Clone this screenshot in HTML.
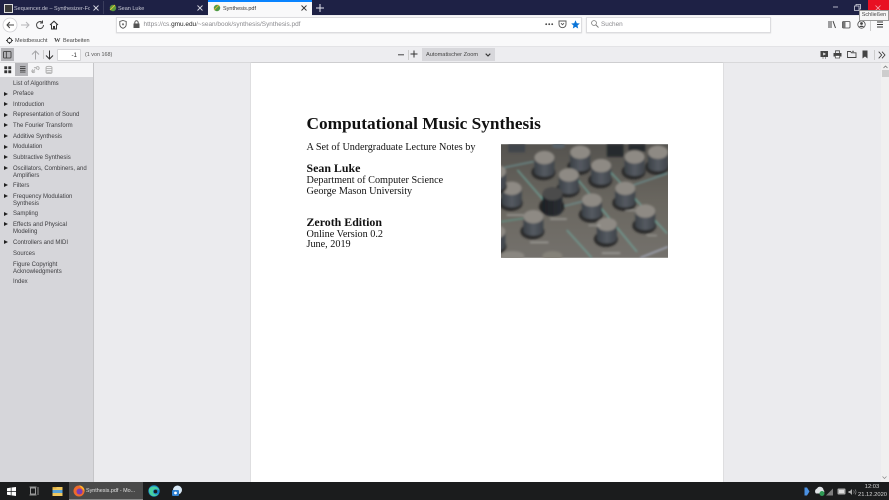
<!DOCTYPE html>
<html lang="de"><head><meta charset="utf-8"><title>Synthesis.pdf</title>
<style>
html,body{margin:0;padding:0;width:889px;height:500px;overflow:hidden;background:#ededf0;font-family:"Liberation Sans",sans-serif}
.a{position:absolute;white-space:nowrap}
#root{position:relative;width:889px;height:500px;overflow:hidden}
.t{font-size:5.5px;line-height:8px;color:#333}
.toc{position:absolute;left:13px;font-size:6px;line-height:7.2px;color:#3d3d40;white-space:nowrap}
.tri{position:absolute;left:4px;width:0;height:0;border-left:4px solid #222;border-top:2.5px solid transparent;border-bottom:2.5px solid transparent}
.pdf{position:absolute;left:306.5px;font-family:"Liberation Serif",serif;color:#111;white-space:nowrap}
.r{font-size:10.2px;line-height:13px}
.h{font-size:11.9px;line-height:15px;font-weight:700}
svg{position:absolute;overflow:visible}
</style></head><body><div id="root">

<!-- title bar -->
<div class="a" style="left:0;top:0;width:889px;height:15px;background:#1e2145"></div>
<div class="a" style="left:103px;top:1px;width:1px;height:13px;background:#3a3d5c"></div>
<div class="a" style="left:208px;top:0;width:104px;height:16px;background:#f9f9fa"></div>
<div class="a" style="left:208px;top:0;width:104px;height:1.5px;background:#0a84ff"></div>
<div class="a" style="left:4px;top:4px;width:7px;height:7px;background:#3a3a3a;border:.5px solid #ddd"></div>
<div class="a t" style="left:14px;top:4.5px;color:#c9cad6;width:76px;overflow:hidden">Sequencer.de – Synthesizer-Fo</div>
<div class="a t" style="left:118px;top:4.5px;color:#c9cad6">Sean Luke</div>
<div class="a t" style="left:223px;top:4.5px;color:#333">Synthesis.pdf</div>
<svg style="left:109px;top:4px" width="8" height="8"><circle cx="4" cy="4" r="3.2" fill="#5c9a3c"/><path d="M1 6 6 1" stroke="#d9c23a"/></svg>
<svg style="left:213px;top:4px" width="8" height="8"><circle cx="4" cy="4" r="3.2" fill="#4f9a45"/><path d="M1 6 6 1" stroke="#d9b83a"/></svg>
<svg style="left:93px;top:5px" width="6" height="6"><path d="M.5.5l5 5M5.500.5l-5 5" stroke="#d5d6e0" stroke-width=".9"/></svg>
<svg style="left:197px;top:5px" width="6" height="6"><path d="M.5.5l5 5M5.500.5l-5 5" stroke="#d5d6e0" stroke-width=".9"/></svg>
<svg style="left:301px;top:5px" width="6" height="6"><path d="M.5.5l5 5M5.500.5l-5 5" stroke="#333" stroke-width=".9"/></svg>
<svg style="left:316px;top:4px" width="8" height="8"><path d="M4 0v8M0 4h8" stroke="#e4e5ee" stroke-width="1"/></svg>
<!-- window controls -->
<div class="a" style="left:868px;top:0;width:21px;height:15px;background:#e81123"></div>
<svg style="left:833px;top:6px" width="6" height="2"><path d="M0 1h5" stroke="#c5c6d4" stroke-width=".9"/></svg>
<svg style="left:854px;top:4px" width="7" height="7"><path d="M.5 2h4.500v4.500H.5zM2 2V.5h4.500V5H5" fill="none" stroke="#d5d6e0" stroke-width=".8"/></svg>
<svg style="left:875px;top:5px" width="6" height="6"><path d="M.5.5l5 5M5.500.5l-5 5" stroke="#f3b0b5" stroke-width=".8"/></svg>
<div class="a" style="left:859px;top:10px;width:28px;height:9px;background:#f5f5f5;border:.5px solid #999;font-size:5.500px;line-height:9px;text-align:center;color:#444;z-index:5">Schließen</div>

<!-- nav bar -->
<div class="a" style="left:0;top:16px;width:889px;height:31px;background:#f9f9fa"></div>
<svg style="left:2px;top:17px" width="16" height="16"><circle cx="8" cy="8" r="7" fill="#fff" stroke="#cfcfd3" stroke-width=".8"/><path d="M12 8H5M7.800 5 5 8l2.800 3" fill="none" stroke="#444" stroke-width="1"/></svg>
<svg style="left:20px;top:20px" width="10" height="10"><path d="M1 5h8M6 2l3 3-3 3" fill="none" stroke="#b5b5b8" stroke-width="1"/></svg>
<svg style="left:35px;top:20px" width="10" height="10"><path d="M8.500 5A3.500 3.500 0 1 1 7 2.200M7.500 .5v2.500H5" fill="none" stroke="#444" stroke-width="1"/></svg>
<svg style="left:49px;top:20px" width="10" height="10"><path d="M1 5 5 1.200 9 5M2.500 4.500V9h2V6.500h1V9h2V4.500" fill="none" stroke="#333" stroke-width="1"/></svg>
<div class="a" style="left:116px;top:17px;width:464px;height:14px;background:#fff;border:.5px solid #dcdcdf;box-shadow:0 .5px 1px #ddd"></div>
<svg style="left:119px;top:20px" width="8" height="9"><path d="M4 .5 7.200 1.500V4.500C7.200 6.500 5.500 7.800 4 8.300 2.500 7.800.8 6.500.8 4.500V1.500z" fill="none" stroke="#555" stroke-width=".9"/><circle cx="4" cy="4.300" r="1.100" fill="#777"/></svg>
<svg style="left:133px;top:20px" width="7" height="9"><rect x=".5" y="3.500" width="6" height="4.500" fill="#555"/><path d="M1.800 3.500V2.500a1.700 1.700 0 0 1 3.400 0v1" fill="none" stroke="#555"/></svg>
<div class="a t" style="left:143.500px;top:21px;color:#8a8a8e;font-size:6.450px">https://cs.<span style="color:#222">gmu.edu</span>/~sean/book/synthesis/Synthesis.pdf</div>
<svg style="left:545px;top:23px" width="9" height="3"><circle cx="1.200" cy="1.200" r=".9" fill="#444"/><circle cx="4.200" cy="1.200" r=".9" fill="#444"/><circle cx="7.200" cy="1.200" r=".9" fill="#444"/></svg>
<svg style="left:558px;top:20px" width="9" height="9"><path d="M1 1h7v3.200a3.500 3.500 0 0 1-7 0zM3 3.200 4.500 4.700 6 3.200" fill="none" stroke="#555" stroke-width=".9"/></svg>
<svg style="left:571px;top:20px" width="9" height="9"><path d="M4.500 .3 5.800 3.200 8.800 3.500 6.500 5.500 7.200 8.500 4.500 6.900 1.800 8.500 2.500 5.500.2 3.500 3.200 3.200z" fill="#0a74d8"/></svg>
<div class="a" style="left:586px;top:17px;width:183px;height:14px;background:#fff;border:.5px solid #dcdcdf;box-shadow:0 .5px 1px #ddd"></div>
<svg style="left:591px;top:20px" width="8" height="8"><circle cx="3" cy="3" r="2.400" fill="none" stroke="#777" stroke-width=".8"/><path d="M4.800 4.800 7.500 7.500" stroke="#777" stroke-width=".9"/></svg>
<div class="a t" style="left:601px;top:21px;color:#8a8a8e;font-size:6.400px">Suchen</div>
<svg style="left:828px;top:20px" width="9" height="9"><path d="M1 1v7M3 1v7M5 1l2.500 7" fill="none" stroke="#444" stroke-width="1"/></svg>
<svg style="left:842px;top:21px" width="9" height="8"><rect x=".5" y=".5" width="7.500" height="6.500" rx="1" fill="none" stroke="#444" stroke-width=".8"/><rect x="1" y="1" width="2.500" height="5.500" fill="#777"/></svg>
<svg style="left:857px;top:20px" width="9" height="9"><circle cx="4.500" cy="4.500" r="3.700" fill="none" stroke="#444" stroke-width=".8"/><circle cx="4.500" cy="3.500" r="1.400" fill="#444"/><path d="M2 7c1-1.800 4-1.800 5 0" fill="#444"/></svg>
<div class="a" style="left:870px;top:19px;width:.5px;height:12px;background:#ccc"></div>
<svg style="left:876px;top:21px" width="8" height="8"><path d="M1 1h6M1 3.500h6M1 6h6" stroke="#333" stroke-width=".9"/></svg>

<!-- bookmarks -->
<svg style="left:6px;top:37px" width="7" height="7"><circle cx="3.500" cy="3.500" r="2.200" fill="none" stroke="#444" stroke-width="1.100"/><path d="M3.500 0v1.200M3.500 5.800V7M0 3.500h1.200M5.800 3.500H7" stroke="#444"/></svg>
<div class="a t" style="left:15px;top:37px;color:#444">Meistbesucht</div>
<div class="a" style="left:54px;top:36.500px;font:700 6.500px/8px 'Liberation Serif',serif;color:#444">W</div>
<div class="a t" style="left:63px;top:37px;color:#444">Bearbeiten</div>

<!-- pdf toolbar -->
<div class="a" style="left:0;top:46px;width:889px;height:.7px;background:#e3e3e6"></div>
<div class="a" style="left:0;top:62px;width:889px;height:.7px;background:#d8d8da"></div>
<div class="a" style="left:1px;top:48px;width:13px;height:13px;background:#b4b4b8"></div>
<svg style="left:3px;top:51px" width="9" height="8"><rect x=".5" y=".5" width="7.500" height="6.500" rx=".8" fill="none" stroke="#333" stroke-width=".8"/><path d="M3.300 .5v6.500" stroke="#333" stroke-width=".8"/></svg>
<svg style="left:31px;top:50px" width="9" height="10"><path d="M4.500 9.500V1M1 4.500 4.500 1 8 4.500" fill="none" stroke="#a5a5a8" stroke-width="1"/></svg>
<div class="a" style="left:42.500px;top:50px;width:.5px;height:9px;background:#ccc"></div>
<svg style="left:45px;top:50px" width="9" height="10"><path d="M4.500 .5V9M1 5.500 4.500 9 8 5.500" fill="none" stroke="#333" stroke-width="1"/></svg>
<div class="a" style="left:57px;top:48.500px;width:24px;height:12px;background:#fff;border:.5px solid #d5d5d8;border-radius:1px;font-size:6.200px;line-height:12px;text-align:right;color:#333;padding-right:3px;box-sizing:border-box">-1</div>
<div class="a t" style="left:85px;top:50.500px;color:#555;font-size:5.400px">(1 von 168)</div>
<svg style="left:398px;top:54px" width="7" height="2"><path d="M0 .8h6" stroke="#444" stroke-width="1"/></svg>
<div class="a" style="left:407.500px;top:50px;width:.5px;height:10px;background:#ccc"></div>
<svg style="left:410px;top:50px" width="9" height="9"><path d="M4 .5v7M.5 4h7" stroke="#333" stroke-width="1"/></svg>
<div class="a" style="left:422px;top:48px;width:73px;height:13px;background:#d7d7db"></div>
<div class="a t" style="left:426px;top:50.500px;color:#444;font-size:5.650px">Automatischer Zoom</div>
<svg style="left:485px;top:52.500px" width="6" height="4"><path d="M.7.7 3 3 5.300.7" fill="none" stroke="#333" stroke-width="1.100"/></svg>
<svg style="left:820px;top:50px" width="9" height="9"><rect x=".5" y="1" width="7.500" height="6" fill="#444"/><path d="M3.200 2.500 6 4 3.200 5.500z" fill="#eee"/><path d="M2.500 8h1M5 8h1" stroke="#444"/></svg>
<svg style="left:833px;top:50px" width="9" height="9"><path d="M2.500 3V.8h4V3" fill="none" stroke="#444" stroke-width=".8"/><rect x=".5" y="3" width="8" height="3.500" fill="#444"/><rect x="2.300" y="5.500" width="4.400" height="2.500" fill="#fff" stroke="#444" stroke-width=".7"/></svg>
<svg style="left:847px;top:50px" width="10" height="9"><path d="M.5 7.500V1.500h3l1 1.300h4.500v4.700z" fill="none" stroke="#444" stroke-width=".9"/><path d="M6 .5v2M5 1.500h2" stroke="#444" stroke-width=".6"/></svg>
<svg style="left:862px;top:50px" width="6" height="9"><path d="M.5.5h5v8L3 6.500.5 8.500z" fill="#444"/></svg>
<div class="a" style="left:873.500px;top:50px;width:.5px;height:10px;background:#ccc"></div>
<svg style="left:878px;top:51px" width="8" height="8"><path d="M.7.7 3.700 4 .7 7.300M4 .7 7 4 4 7.300" fill="none" stroke="#333" stroke-width=".8"/></svg>

<!-- viewer -->
<div class="a" style="left:93px;top:63px;width:796px;height:419px;background:#ebebee"></div>
<div class="a" style="left:251px;top:63px;width:472px;height:419px;background:#fff;box-shadow:0 0 1px #aaa"></div>
<div class="a" style="left:881px;top:63px;width:8px;height:419px;background:#f0f0f0"></div>
<svg style="left:883px;top:65px" width="5" height="4"><path d="M.5 3 2.500 1 4.500 3" fill="none" stroke="#666" stroke-width=".7"/></svg>
<div class="a" style="left:881.500px;top:70px;width:7px;height:7px;background:#cdcdcd"></div>

<!-- sidebar -->
<div class="a" style="left:0;top:63px;width:92.500px;height:14px;background:#f5f5f7"></div>
<div class="a" style="left:0;top:77px;width:92.500px;height:405px;background:#d6d6da"></div>
<div class="a" style="left:92.500px;top:63px;width:.7px;height:419px;background:#c5c5c8"></div>
<svg style="left:4px;top:66px" width="8" height="8"><rect x=".3" y=".3" width="2.900" height="2.900" fill="#333"/><rect x="4.300" y=".3" width="2.900" height="2.900" fill="#333"/><rect x=".3" y="4.300" width="2.900" height="2.900" fill="#333"/><rect x="4.300" y="4.300" width="2.900" height="2.900" fill="#333"/></svg>
<div class="a" style="left:15px;top:63px;width:13px;height:13px;background:#b6b6ba"></div>
<svg style="left:17.500px;top:66px" width="8" height="8"><path d="M2 .7h5.500M2 2.500h5.500M2 4.300h5.500M2 6.100h5.500" stroke="#444" stroke-width=".9"/></svg>
<svg style="left:31px;top:66px" width="9" height="8"><path d="M1 6.500 4 3.500M3 2a1.500 1.500 0 0 1 2 0l1.500 1.500M2 3.500 1 4.500a1.500 1.500 0 0 0 2 2l1-1M5 1.500 6 .8a1.500 1.500 0 0 1 2 2L7 4" fill="none" stroke="#aaa" stroke-width=".9"/></svg>
<svg style="left:45px;top:66px" width="8" height="8"><ellipse cx="4" cy="1.500" rx="3" ry="1.200" fill="none" stroke="#aaa" stroke-width=".8"/><path d="M1 1.500v5c0 1.500 6 1.500 6 0v-5M1 3.500c0 1.500 6 1.500 6 0M1 5.200c0 1.500 6 1.500 6 0" fill="none" stroke="#aaa" stroke-width=".8"/></svg>

<div class="toc" style="top:80.500px">List of Algorithms</div>
<div class="tri" style="top:91.500px"></div><div class="toc" style="top:91px">Preface</div>
<div class="tri" style="top:102px"></div><div class="toc" style="top:101.500px">Introduction</div>
<div class="tri" style="top:112.500px"></div><div class="toc" style="top:112px">Representation of Sound</div>
<div class="tri" style="top:123px"></div><div class="toc" style="top:123px">The Fourier Transform</div>
<div class="tri" style="top:134px"></div><div class="toc" style="top:133.500px">Additive Synthesis</div>
<div class="tri" style="top:144.500px"></div><div class="toc" style="top:144px">Modulation</div>
<div class="tri" style="top:155px"></div><div class="toc" style="top:155px">Subtractive Synthesis</div>
<div class="tri" style="top:166px"></div><div class="toc" style="top:165.500px">Oscillators, Combiners, and<br>Amplifiers</div>
<div class="tri" style="top:183px"></div><div class="toc" style="top:183px">Filters</div>
<div class="tri" style="top:194px"></div><div class="toc" style="top:193.500px">Frequency Modulation<br>Synthesis</div>
<div class="tri" style="top:211.500px"></div><div class="toc" style="top:211px">Sampling</div>
<div class="tri" style="top:222px"></div><div class="toc" style="top:222px">Effects and Physical<br>Modeling</div>
<div class="tri" style="top:240px"></div><div class="toc" style="top:239.500px">Controllers and MIDI</div>
<div class="toc" style="top:250.500px">Sources</div>
<div class="toc" style="top:261.500px">Figure Copyright<br>Acknowledgments</div>
<div class="toc" style="top:278.500px">Index</div>

<!-- pdf page -->
<div class="pdf" style="top:114px;font-size:17.300px;line-height:20px;font-weight:700">Computational Music Synthesis</div>
<div class="pdf r" style="top:141px">A Set of Undergraduate Lecture Notes by</div>
<div class="pdf h" style="top:161px">Sean Luke</div>
<div class="pdf r" style="top:174px">Department of Computer Science</div>
<div class="pdf r" style="top:185px">George Mason University</div>
<div class="pdf h" style="top:215px">Zeroth Edition</div>
<div class="pdf r" style="top:228px">Online Version 0.2</div>
<div class="pdf r" style="top:238px">June, 2019</div>

<!-- photo -->
<svg style="left:501px;top:144px;overflow:hidden" width="167" height="114" viewBox="33 28 500 340">
<defs>
<filter id="b" x="-5%" y="-5%" width="110%" height="110%"><feGaussianBlur stdDeviation="3"/></filter>
<linearGradient id="bg" x1="0" y1="0" x2="0" y2="1"><stop offset="0" stop-color="#55534f"/><stop offset=".5" stop-color="#69665f"/><stop offset="1" stop-color="#74716c"/></linearGradient>
<linearGradient id="k" x1="0" x2="1" y1="0" y2="0"><stop offset="0" stop-color="#3b4147"/><stop offset=".5" stop-color="#555a61"/><stop offset="1" stop-color="#3f444a"/></linearGradient>
<linearGradient id="d" x1="0" x2="1" y1="0" y2="0"><stop offset="0" stop-color="#1e2125"/><stop offset="1" stop-color="#2a2e33"/></linearGradient>
<symbol id="kn" overflow="visible"><ellipse cx="-3" cy="44" rx="36" ry="24" fill="#2b2a29"/><path d="M-30 0V42C-30 62 30 62 30 42V0z" fill="url(#k)"/><ellipse cx="0" cy="0" rx="30" ry="20" fill="#8e8a84"/></symbol>
</defs>
<rect x="33" y="28" width="500" height="340" fill="url(#bg)"/>
<g filter="url(#b)">
<path d="M82 105 160 195M260 130 440 350M360 110 530 295M230 285 305 368" stroke="#6fb3a8" stroke-width="3" fill="none"/>
<path d="M33 100 130 80M430 150 533 115M215 215 275 200" stroke="#6f9ea0" stroke-width="3" fill="none"/>
<path d="M33 260 100 250" stroke="#5f9c8c" stroke-width="3"/>
<rect x="55" y="28" width="50" height="24" fill="#3f454b"/>
<ellipse cx="205" cy="33" rx="20" ry="8" fill="#566068"/>
<g fill="#26292d"><rect x="350" y="28" width="50" height="38"/><rect x="415" y="28" width="50" height="22"/></g>
<use href="#kn" x="163" y="68"/>
<use href="#kn" x="270" y="52"/>
<use href="#kn" x="433" y="66"/>
<use href="#kn" x="503" y="52"/>
<use href="#kn" x="333" y="92"/>
<use href="#kn" x="236" y="120"/>
<use href="#kn" x="65" y="160"/>
<use href="#kn" x="405" y="160"/>
<ellipse cx="185" cy="215" rx="38" ry="28" fill="#222"/>
<path d="M157 178V225C157 250 217 250 217 225V178z" fill="url(#d)"/><ellipse cx="187" cy="176" rx="30" ry="20" fill="#4c4c4b"/>
<use href="#kn" x="305" y="195"/>
<use href="#kn" x="465" y="228"/>
<use href="#kn" x="130" y="245"/>
<use href="#kn" x="350" y="268"/>
<use href="#kn" x="18" y="110"/>
<use href="#kn" x="16" y="290"/>
<ellipse cx="187" cy="362" rx="30" ry="14" fill="#858279"/>
<ellipse cx="68" cy="362" rx="35" ry="14" fill="#8a8781"/>
<g fill="#cfd0cc" opacity=".55"><rect x="50" y="238" width="50" height="4"/><rect x="180" y="250" width="50" height="4"/><rect x="120" y="320" width="55" height="4"/><rect x="335" y="352" width="55" height="4"/><rect x="470" y="300" width="30" height="3"/><rect x="295" y="270" width="35" height="3"/><rect x="405" y="225" width="30" height="3"/></g>
<path d="M450 368 533 335" stroke="#aab0c4" stroke-width="4"/>
</g>
</svg>

<!-- taskbar -->
<div class="a" style="left:0;top:482px;width:889px;height:18px;background:#1b1c1d"></div>
<div class="a" style="left:69px;top:482px;width:74px;height:18px;background:#4a4a4a"></div>
<div class="a" style="left:69px;top:498.500px;width:74px;height:1.500px;background:#8a8a8a"></div>
<svg style="left:7px;top:487px" width="9" height="9"><path d="M0 1.200 3.800.6V4H0zM4.500.5 9 0V4H4.500zM0 4.700H3.800V8.200L0 7.700zM4.500 4.700H9V9L4.500 8.400z" fill="#fff"/></svg>
<svg style="left:29px;top:486px" width="10" height="10"><rect x="1.500" y="2" width="5" height="6" fill="none" stroke="#bbb" stroke-width=".8"/><path d="M.5 1h7M.5 9h7M9 1v8" stroke="#bbb" stroke-width=".7"/></svg>
<svg style="left:52px;top:485.500px" width="11" height="11"><rect x=".5" y="1" width="10" height="9" fill="#f0c75e"/><rect x=".5" y="4" width="10" height="3" fill="#5aa3d8"/><rect x=".5" y="1" width="4" height="1.500" fill="#d9a93c"/></svg>
<svg style="left:73px;top:485px" width="12" height="12"><circle cx="6" cy="6" r="5.500" fill="#ef6a2a"/><circle cx="6.500" cy="6.500" r="3" fill="#7b3bb5"/><path d="M6 .5C10 .5 12 4 11.500 7 10.500 4 8 3 6 .5z" fill="#ffb52e"/></svg>
<div class="a t" style="left:86px;top:486.500px;color:#e0e0e0;font-size:5.400px">Synthesis.pdf - Mo...</div>
<svg style="left:148px;top:484.500px" width="12" height="12"><circle cx="6" cy="6" r="5.700" fill="#1a87c9"/><path d="M1 4C3 .5 10 .5 11.500 5.500 9.500 3.800 6 3.500 5 6 4.500 8.500 7.500 10.500 10.500 9 8 12.500 1.500 12 1 6z" fill="#48d0a0"/><circle cx="7.500" cy="6.500" r="1.800" fill="#1b1c1d"/></svg>
<svg style="left:171px;top:485px" width="12" height="12"><circle cx="6.500" cy="5" r="4.500" fill="#d8e8f5"/><rect x="1" y="5" width="7" height="6" rx="1" fill="#2e7fd0"/><circle cx="4.500" cy="8" r="1.400" fill="#fff"/></svg>
<svg style="left:804px;top:487px" width="6" height="9"><path d="M.5.500H3L5.500 4.500 3 8.500H.5z" fill="#4a90e2"/></svg>
<svg style="left:815px;top:487px" width="10" height="9"><path d="M1 6.500A3 3 0 0 1 2 1.500 3.500 3.500 0 0 1 8.500 3 2 2 0 0 1 8 6.500z" fill="#dfe3e6"/><circle cx="7" cy="6.500" r="2.500" fill="#2f9a55"/></svg>
<svg style="left:826px;top:488px" width="8" height="8"><path d="M0 7.500 7 .5V7.500z" fill="#7d7d7d"/></svg>
<svg style="left:837px;top:488px" width="9" height="7"><rect x=".5" y=".5" width="8" height="6" rx="1" fill="#aaa"/><rect x="2" y="2" width="5" height="3" fill="#ddd"/></svg>
<svg style="left:848px;top:488px" width="9" height="8"><path d="M.5 3h1.500L4 1V7L2 5H.5z" fill="#aaa"/><path d="M5.500 2.500a2 2 0 0 1 0 3M7 1.500a3.500 3.500 0 0 1 0 5" fill="none" stroke="#999" stroke-width=".6"/></svg>
<div class="a" style="left:858px;top:483px;width:28px;text-align:center;font-size:5.800px;line-height:8px;color:#d5d5d5">12:03<br>21.12.2020</div>
<svg style="left:882px;top:476px" width="5" height="3"><path d="M.5.5 2.500 2.500 4.500.5" fill="none" stroke="#888" stroke-width=".7"/></svg>

</div></body></html>
